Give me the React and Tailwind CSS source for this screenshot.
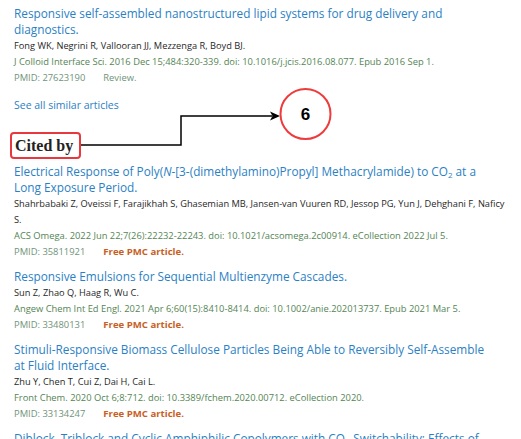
import React from "react";

const FONT = { fontFamily: '"Open Sans", "Noto Sans", sans-serif' };

function Article({ title, authors, journal, pmid, free, review }) {
  return (
    <div className="mb-[8px]">
      <div className="text-[11.8px] leading-[16px] text-[#2b7fc4] mb-[1px]">
        {title.map((t, i) => (
          <div key={i} className="whitespace-nowrap">{t}</div>
        ))}
      </div>
      <div className="text-[9.25px] leading-[16px] text-[#1f1f1f]">
        {authors.map((a, i) => (
          <div key={i} className="whitespace-nowrap">{a}</div>
        ))}
      </div>
      <div className="text-[9.35px] leading-[16px] text-[#548554] whitespace-nowrap">{journal}</div>
      <div className="flex gap-[18px] leading-[16px] whitespace-nowrap">
        <span className="text-[9.4px] text-[#6f9479]">PMID: {pmid}</span>
        {free && <span className="text-[9.6px] font-bold text-[#c8601f]">Free PMC article.</span>}
        {review && <span className="text-[9.4px] text-[#6f9479]">Review.</span>}
      </div>
    </div>
  );
}

export default function App() {
  return (
    <div className="relative w-[521px] h-[439px] overflow-hidden bg-white" style={FONT}>
      <div className="pl-[14px] pt-[5px]">
        <Article
          title={["Responsive self-assembled nanostructured lipid systems for drug delivery and", "diagnostics."]}
          authors={["Fong WK, Negrini R, Vallooran JJ, Mezzenga R, Boyd BJ."]}
          journal="J Colloid Interface Sci. 2016 Dec 15;484:320-339. doi: 10.1016/j.jcis.2016.08.077. Epub 2016 Sep 1."
          pmid="27623190"
          review
        />
        <div className="pt-[3px] text-[10.5px] leading-[16px] text-[#2b7fc4]">See all similar articles</div>

        <div className="mt-[19px] -ml-[4px] w-[71px] h-[27px] border-2 border-[#e8383d] rounded-[4px] flex items-center pl-[3px]">
          <span
            className="whitespace-nowrap text-[16px] font-bold text-[#222]"
            style={{ fontFamily: '"Liberation Serif", "DejaVu Serif", serif' }}
          >
            Cited by
          </span>
        </div>

        <div className="mt-[4px]">
          <Article
            title={[
              <>Electrical Response of Poly(<i>N</i>-[3-(dimethylamino)Propyl] Methacrylamide) to CO<sub className="text-[8px]">2</sub> at a</>,
              "Long Exposure Period.",
            ]}
            authors={[
              "Shahrbabaki Z, Oveissi F, Farajikhah S, Ghasemian MB, Jansen-van Vuuren RD, Jessop PG, Yun J, Dehghani F, Naficy",
              "S.",
            ]}
            journal="ACS Omega. 2022 Jun 22;7(26):22232-22243. doi: 10.1021/acsomega.2c00914. eCollection 2022 Jul 5."
            pmid="35811921"
            free
          />
          <Article
            title={["Responsive Emulsions for Sequential Multienzyme Cascades."]}
            authors={["Sun Z, Zhao Q, Haag R, Wu C."]}
            journal="Angew Chem Int Ed Engl. 2021 Apr 6;60(15):8410-8414. doi: 10.1002/anie.202013737. Epub 2021 Mar 5."
            pmid="33480131"
            free
          />
          <Article
            title={["Stimuli-Responsive Biomass Cellulose Particles Being Able to Reversibly Self-Assemble", "at Fluid Interface."]}
            authors={["Zhu Y, Chen T, Cui Z, Dai H, Cai L."]}
            journal="Front Chem. 2020 Oct 6;8:712. doi: 10.3389/fchem.2020.00712. eCollection 2020."
            pmid="33134247"
            free
          />
          <div className="text-[11.8px] leading-[16px] text-[#2b7fc4] whitespace-nowrap">
            Diblock, Triblock and Cyclic Amphiphilic Copolymers with CO<sub className="text-[8px]">2</sub>-Switchability: Effects of
          </div>
        </div>
      </div>

      <svg className="absolute left-0 top-0" width="521" height="439">
        <polyline points="81,145 181,145 181,116 272,116" fill="none" stroke="#000" strokeWidth="1.5" />
        <polygon points="280,116 270,111.5 272.5,116 270,120.5" fill="#000" />
        <circle cx="305.5" cy="114" r="25" fill="#fff" stroke="#ee3b3b" strokeWidth="2" />
        <text x="305.5" y="120" textAnchor="middle" fontSize="17" fontWeight="bold" fill="#000" fontFamily="Liberation Sans, Arial, sans-serif">6</text>
      </svg>
    </div>
  );
}
